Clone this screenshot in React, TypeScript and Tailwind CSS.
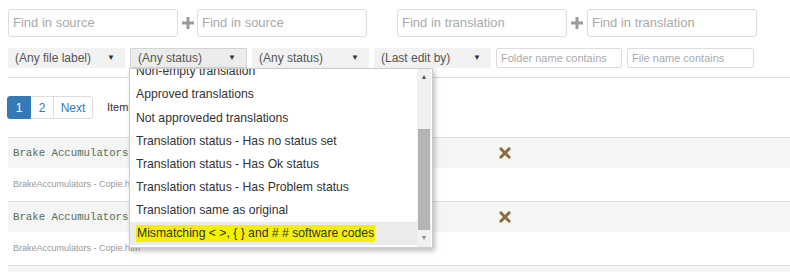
import React from 'react';

const options = [
  "Non-empty translation",
  "Approved translations",
  "Not approveded translations",
  "Translation status - Has no status set",
  "Translation status - Has Ok status",
  "Translation status - Has Problem status",
  "Translation same as original",
];

const Plus = () => (
  <svg width="12" height="12" viewBox="0 0 12 12" className="shrink-0">
    <path d="M4.5 0h3v4.5H12v3H7.5V12h-3V7.5H0v-3h4.5z" fill="#9a9a9a" />
  </svg>
);

const Cross = () => (
  <svg width="12" height="12" viewBox="0 0 12 12">
    <path d="M2 2l8 8M10 2l-8 8" stroke="#8a6d3b" strokeWidth="3" strokeLinecap="square" />
  </svg>
);

const Caret = () => <span className="text-[8px] text-[#333]">▼</span>;

const TextBox = ({ label }: { label: string }) => (
  <div className="w-[170px] h-[28px] border border-[#ddd] rounded-[3px] flex items-center px-[4px] text-[13px] text-[#aaa] bg-white">
    {label}
  </div>
);

const Select = ({ label, active }: { label: string; active?: boolean }) => (
  <div
    className={`w-[117px] h-[20px] flex items-center justify-between pl-[7px] pr-[10px] text-[12px] text-[#555] ${
      active ? 'bg-[#ececec] border border-[#d4d4d4]' : 'bg-[#f2f2f2]'
    }`}
  >
    <span>{label}</span>
    <Caret />
  </div>
);

const Row = () => (
  <>
    <div className="h-[31px] bg-[#f5f5f5] border-t border-[#ddd] flex items-center relative">
      <span className="pl-[5px] text-[10.7px] text-[#52704f]" style={{ fontFamily: '"Liberation Mono", monospace' }}>
        Brake Accumulators - Copie.htm
      </span>
      <div className="absolute left-[491px] top-[9px]">
        <Cross />
      </div>
    </div>
    <div className="h-[33px] flex items-center pl-[5px] text-[9px] text-[#999]">BrakeAccumulators - Copie.htm</div>
  </>
);

export default function App() {
  return (
    <div className="w-[790px] h-[272px] bg-white relative overflow-hidden" style={{ fontFamily: '"Liberation Sans", Arial, sans-serif' }}>
      <div className="pl-[8px] pt-[8px]">
        <div className="flex items-center">
          <TextBox label="Find in source" />
          <div className="w-[19px] flex justify-center"><Plus /></div>
          <TextBox label="Find in source" />
          <div className="w-[30px]" />
          <div className="mt-[1px] flex items-center">
            <TextBox label="Find in translation" />
            <div className="w-[20px] flex justify-center"><Plus /></div>
            <TextBox label="Find in translation" />
          </div>
        </div>
        <div className="flex items-center mt-[11px] gap-[5px]">
          <Select label="(Any file label)" />
          <Select label="(Any status)" active />
          <Select label="(Any status)" />
          <Select label="(Last edit by)" />
          <div className="w-[126px] h-[20px] border border-[#ddd] rounded-[2px] px-[4px] text-[11px] text-[#aaa] flex items-center">Folder name contains</div>
          <div className="w-[127px] h-[20px] border border-[#ddd] rounded-[2px] px-[4px] text-[11px] text-[#aaa] flex items-center">File name contains</div>
        </div>
        <div className="mt-[9px] border-b border-[#ddd]" />
        <div className="flex items-center mt-[18px] -ml-[1px]">
          <div className="flex h-[23px] text-[12px]">
            <div className="w-[24px] bg-[#337ab7] border border-[#337ab7] text-white flex items-center justify-center rounded-l-[3px]">1</div>
            <div className="w-[23px] border border-l-0 border-[#ddd] text-[#337ab7] flex items-center justify-center">2</div>
            <div className="w-[39px] border border-l-0 border-[#ddd] text-[#337ab7] flex items-center justify-center rounded-r-[3px]">Next</div>
          </div>
          <span className="ml-[14px] text-[11px] text-[#333]">Items per page</span>
        </div>
        <div className="mt-[18px]">
          <Row />
          <Row />
          <div className="border-t border-[#ddd] h-[8px] bg-[#f5f5f5]" />
        </div>
      </div>

      <div className="absolute left-[129px] top-[68px] w-[304px] h-[180px] bg-white border border-[#ccc] shadow-[2px_3px_5px_rgba(0,0,0,0.25)] overflow-hidden flex">
        <div className="flex-1 relative overflow-hidden">
          <div className="absolute left-0 right-0 top-[-9px]">
            {options.map((o) => (
              <div key={o} className="h-[23.1px] flex items-center pl-[6px] text-[12.2px] text-[#333]">{o}</div>
            ))}
            <div className="h-[23.1px] flex items-center pl-[6px] text-[12.2px] text-[#333] bg-[#ebebeb]">
              <span className="bg-[#f2f200] px-[1px] leading-[17px]">Mismatching &lt; &gt;, {'{ }'} and # # software codes</span>
            </div>
          </div>
        </div>
        <div className="w-[14px] bg-[#f1f1f1] flex flex-col items-center mr-[1px]">
          <span className="text-[7px] text-[#555] mt-[3px] leading-[10px]">▲</span>
          <div className="w-[12px] bg-[#b4b4b4] mt-[47px] h-[101px]" />
          <span className="text-[7px] text-[#888] mt-[3px] leading-[10px]">▼</span>
        </div>
      </div>
    </div>
  );
}
